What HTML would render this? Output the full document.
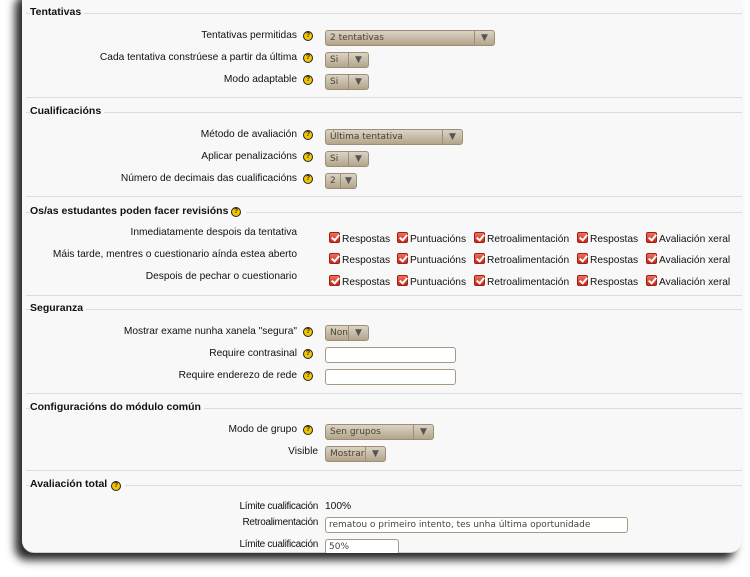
<!DOCTYPE html>
<html><head><meta charset="utf-8"><style>
*{margin:0;padding:0;box-sizing:border-box}
body{width:750px;height:577px;background:#fff;position:relative;overflow:hidden;font-family:"Liberation Sans",sans-serif;font-size:10.2px;color:#111}
#p{position:absolute;left:22px;top:-12px;width:720px;height:565px;background:#f8f8f8;border-radius:12px;box-shadow:-7px 7px 9px rgba(0,0,0,.85);border-bottom:1px solid #d8cfc0}
.a{position:absolute;white-space:nowrap}
.lg{position:absolute;left:30px;font-weight:bold;font-size:10.5px;background:#f8f8f8;padding-right:3px}
.ln{position:absolute;left:26px;width:716px;height:1px;background:#ddd}
.lb{position:absolute;right:453px;white-space:nowrap;text-align:right;font-size:10.2px}
.h{position:absolute;width:10px;height:10px;border-radius:50%;background:#f2c500;border:1px solid #222;font-size:7px;font-weight:bold;line-height:8px;text-align:center;color:#222}
.s{position:absolute;left:325px;height:16px;border:1px solid #9d8f77;border-radius:3px;background:linear-gradient(#dcd3c5,#b3a58c);font-family:"DejaVu Sans",sans-serif;font-size:9px;color:#4a4232;line-height:14px;padding-left:4px;overflow:hidden}
.s i{position:absolute;right:0;top:0;width:20px;height:14px;border-left:1px solid #9d8f77;font-style:normal;text-align:center;font-size:9px;color:#555}
.t{position:absolute;left:325px;height:16px;border:1px solid #a89a82;border-radius:3px;background:#fff;font-family:"DejaVu Sans",sans-serif;font-size:9px;color:#444;padding-left:3px;line-height:14px}
.c{position:absolute;width:11px;height:11px;border-radius:2px;background:linear-gradient(#f07060,#c8281a);border:1px solid #a02010}
.c:after{content:"";position:absolute;left:3px;top:0;width:3px;height:6px;border:solid #fff;border-width:0 2px 2px 0;transform:rotate(40deg)}
.n{font-size:10px;letter-spacing:-0.3px}
</style></head><body>
<div id="p"></div>

<div class="ln" style="top:13px"></div><div class="lg" style="top:6px">Tentativas</div>
<div class="lb" style="top:30px">Tentativas permitidas</div><div class="h" style="left:303px;top:31px">?</div>
<div class="s" style="top:30px;width:170px">2 tentativas<i>▼</i></div>
<div class="lb" style="top:52px">Cada tentativa constrúese a partir da última</div><div class="h" style="left:303px;top:53px">?</div>
<div class="s" style="top:52px;width:44px">Si<i>▼</i></div>
<div class="lb" style="top:74px">Modo adaptable</div><div class="h" style="left:303px;top:75px">?</div>
<div class="s" style="top:74px;width:44px">Si<i>▼</i></div>
<div class="ln" style="top:97px"></div>

<div class="ln" style="top:112px"></div><div class="lg" style="top:105px">Cualificacións</div>
<div class="lb" style="top:129px">Método de avaliación</div><div class="h" style="left:303px;top:130px">?</div>
<div class="s" style="top:129px;width:138px">Última tentativa<i>▼</i></div>
<div class="lb" style="top:151px">Aplicar penalizacións</div><div class="h" style="left:303px;top:152px">?</div>
<div class="s" style="top:151px;width:44px">Si<i>▼</i></div>
<div class="lb" style="top:173px">Número de decimais das cualificacións</div><div class="h" style="left:303px;top:174px">?</div>
<div class="s" style="top:173px;width:32px">2<i style="width:16px">▼</i></div>
<div class="ln" style="top:196px"></div>

<div class="ln" style="top:212px"></div><div class="lg" style="top:205px;padding-right:18px">Os/as estudantes poden facer revisións</div><div class="h" style="left:231px;top:207px">?</div>
<div class="lb" style="top:227px">Inmediatamente despois da tentativa</div>
<div class="lb" style="top:249px">Máis tarde, mentres o cuestionario aínda estea aberto</div>
<div class="lb" style="top:271px">Despois de pechar o cuestionario</div>

<div class="ln" style="top:295px"></div>
<div class="ln" style="top:309px"></div><div class="lg" style="top:302px">Seguranza</div>
<div class="lb" style="top:326px">Mostrar exame nunha xanela "segura"</div><div class="h" style="left:303px;top:327px">?</div>
<div class="s" style="top:325px;width:44px">Non<i>▼</i></div>
<div class="lb" style="top:348px">Require contrasinal</div><div class="h" style="left:303px;top:349px">?</div>
<div class="t" style="top:347px;width:131px"></div>
<div class="lb" style="top:370px">Require enderezo de rede</div><div class="h" style="left:303px;top:371px">?</div>
<div class="t" style="top:369px;width:131px"></div>
<div class="ln" style="top:393px"></div>

<div class="ln" style="top:408px"></div><div class="lg" style="top:401px">Configuracións do módulo común</div>
<div class="lb" style="top:424px">Modo de grupo</div><div class="h" style="left:303px;top:425px">?</div>
<div class="s" style="top:424px;width:109px">Sen grupos<i>▼</i></div>
<div class="lb" style="top:446px;right:432px">Visible</div>
<div class="s" style="top:446px;width:61px">Mostrar<i>▼</i></div>
<div class="ln" style="top:470px"></div>

<div class="ln" style="top:485px"></div><div class="lg" style="top:478px;padding-right:18px">Avaliación total</div><div class="h" style="left:111px;top:481px">?</div>
<div class="lb n" style="top:501px;right:432px">Límite cualificación</div><div class="a" style="left:325px;top:501px">100%</div>
<div class="lb n" style="top:517px;right:432px">Retroalimentación</div>
<div class="t" style="top:517px;width:303px">rematou o primeiro intento, tes unha última oportunidade</div>
<div class="lb n" style="top:539px;right:432px">Límite cualificación</div>
<div class="t" style="top:539px;width:74px;height:14px;border-bottom:none;border-radius:3px 3px 0 0">50%</div>

<div id="cb"></div>
<script>
var xs=[329,397,474,577,646],tx=[342,410,487,590,659],w=["Respostas","Puntuacións","Retroalimentación","Respostas","Avaliación xeral"],ys=[232,253,275],h="";
ys.forEach(function(y){xs.forEach(function(x,i){h+='<div class="c" style="left:'+x+'px;top:'+y+'px"></div><div class="a" style="left:'+tx[i]+'px;top:'+(y+2)+'px">'+w[i]+'</div>';});});
document.getElementById("cb").innerHTML=h;
</script>
</body></html>
